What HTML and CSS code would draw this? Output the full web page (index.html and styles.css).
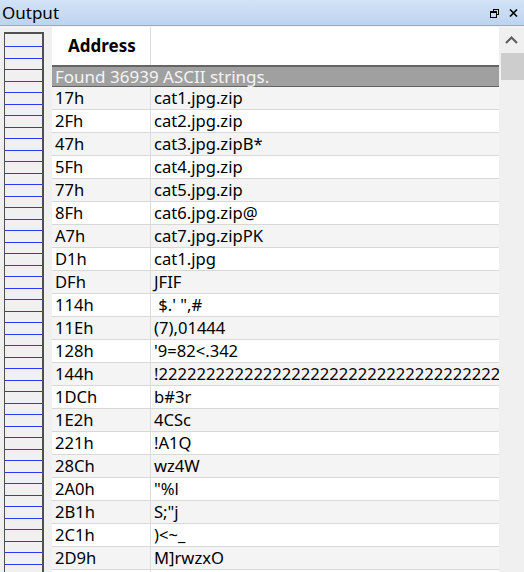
FILE: index.html
```html
<!DOCTYPE html>
<html>
<head>
<meta charset="utf-8">
<link rel="stylesheet" href="styles.css">
</head>
<body>
<div class="panel">
  <div class="titlebar">
    <span class="title">Output</span>
    <div class="tools">
      <svg class="ico" width="9" height="9" viewBox="0 0 9 9"><path d="M3 0.5H8.5V5.5H6.5M3 0.5V2.5M0.5 2.5H6.5V8.5H0.5Z M0.5 3.5H6.5" fill="none" stroke="#000" stroke-width="1" shape-rendering="crispEdges"/></svg>
      <svg class="ico" width="9" height="8" viewBox="0 0 9 8"><path d="M1 0.5L8 7.5M8 0.5L1 7.5" fill="none" stroke="#000" stroke-width="1.6"/></svg>
    </div>
  </div>
  <div class="body">
    <div class="gutter">
      <div class="minimap">
        <i></i><i></i><i></i><i></i><i></i><i></i><i></i><i></i><i></i><i></i>
        <i></i><i></i><i></i><i></i><i></i><i></i><i></i><i></i><i></i><i></i>
        <i></i><i></i><i></i><i></i><i></i><i></i><i></i><i></i><i></i><i></i>
        <i></i><i></i><i></i><i></i><i></i><i></i><i></i><i></i><i></i><i></i>
        <i></i><i></i><i></i><i></i><i></i><i></i><i></i><i></i>
      </div>
    </div>
    <div class="grid">
      <div class="header">
        <div class="c1 hcell">Address</div>
        <div class="c2 hcell"></div>
      </div>
      <div class="found">Found 36939 ASCII strings.</div>
      <div class="rows">
        <div class="row"><div class="c1">17h</div><div class="c2">cat1.jpg.zip</div></div>
        <div class="row"><div class="c1">2Fh</div><div class="c2">cat2.jpg.zip</div></div>
        <div class="row"><div class="c1">47h</div><div class="c2">cat3.jpg.zipB*</div></div>
        <div class="row"><div class="c1">5Fh</div><div class="c2">cat4.jpg.zip</div></div>
        <div class="row"><div class="c1">77h</div><div class="c2">cat5.jpg.zip</div></div>
        <div class="row"><div class="c1">8Fh</div><div class="c2">cat6.jpg.zip@</div></div>
        <div class="row"><div class="c1">A7h</div><div class="c2">cat7.jpg.zipPK</div></div>
        <div class="row"><div class="c1">D1h</div><div class="c2">cat1.jpg</div></div>
        <div class="row"><div class="c1">DFh</div><div class="c2">JFIF</div></div>
        <div class="row"><div class="c1">114h</div><div class="c2">&nbsp;$.' ",#</div></div>
        <div class="row"><div class="c1">11Eh</div><div class="c2">(7),01444</div></div>
        <div class="row"><div class="c1">128h</div><div class="c2">'9=82&lt;.342</div></div>
        <div class="row"><div class="c1">144h</div><div class="c2">!22222222222222222222222222222222222222222222222222</div></div>
        <div class="row"><div class="c1">1DCh</div><div class="c2">b#3r</div></div>
        <div class="row"><div class="c1">1E2h</div><div class="c2">4CSc</div></div>
        <div class="row"><div class="c1">221h</div><div class="c2">!A1Q</div></div>
        <div class="row"><div class="c1">28Ch</div><div class="c2">wz4W</div></div>
        <div class="row"><div class="c1">2A0h</div><div class="c2">"%l</div></div>
        <div class="row"><div class="c1">2B1h</div><div class="c2">S;"j</div></div>
        <div class="row"><div class="c1">2C1h</div><div class="c2">)&lt;~_</div></div>
        <div class="row"><div class="c1">2D9h</div><div class="c2">M]rwzxO</div></div>
        <div class="row row-empty"><div class="c1"></div><div class="c2"></div></div>
      </div>
    </div>
    <div class="scrollbar">
      <div class="arrow"><svg width="13" height="8" viewBox="0 0 13 8"><path d="M1 7L6.5 1.5L12 7" fill="none" stroke="#606060" stroke-width="2.2"/></svg></div>
      <div class="thumb"></div>
    </div>
  </div>
</div>
</body>
</html>
```
FILE: styles.css
```css
html, body { margin: 0; padding: 0; }
body {
  width: 524px;
  height: 572px;
  overflow: hidden;
  background: #f0f0f0;
  font-family: "Noto Sans", "Open Sans", sans-serif;
  font-size: 16.6px;
  color: #000;
}
.panel { display: flex; flex-direction: column; height: 572px; }
.titlebar {
  height: 25px;
  flex: none;
  display: flex;
  align-items: center;
  justify-content: space-between;
  background: linear-gradient(#d3e3f6, #bdd4ef);
  border-bottom: 1px solid #9fa9b6;
  padding-left: 2px;
  padding-right: 6px;
}
.title { font-size: 17px; color: #000; line-height: 25px; }
.tools { display: flex; gap: 10px; align-items: center; padding-top: 1px; }
.ico { display: block; }
.body { flex: 1; display: flex; min-height: 0; border-top: 1px solid #f4f4f4; }
.gutter { width: 52px; flex: none; padding: 5px 0 0 4px; box-sizing: border-box; }
.minimap {
  width: 37px;
  height: 548px;
  padding-top: 12px;
  border: 1px solid #505050;
  border-top-width: 2px;
  border-right-width: 2px;
  background: #f0f0f0;
  display: flex;
  flex-direction: column;
  overflow: hidden;
}
.minimap i {
  display: block;
  flex: none;
  height: 11px;
  border-top: 1px solid #3333ff;
}
.minimap i:nth-child(even) { height: 10px; }
.grid { width: 447px; flex: none; display: flex; flex-direction: column; overflow: hidden; background: #fff; }
.header { height: 38px; display: flex; background: #fff; flex: none; }
.hcell { font-weight: bold; font-size: 17px; line-height: 38px; }
.header .c1 { padding-left: 16px; }
.c1 { width: 99px; flex: none; box-sizing: border-box; padding-left: 3px; border-right: 1px solid #dcdcdc; white-space: nowrap; }
.c2 { flex: 1; padding-left: 3px; white-space: nowrap; overflow: hidden; }
.found {
  height: 19px;
  line-height: 19px;
  background: #a0a0a0;
  border-top: 2px solid #646464;
  border-bottom: 1px solid #646464;
  color: #f4f4f4;
  font-size: 17px;
  padding-left: 3px;
  flex: none;
  white-space: nowrap;
}
.rows { display: flex; flex-direction: column; }
.row { height: 22px; line-height: 22px; display: flex; border-bottom: 1px solid #d8d8d8; flex: none; }
.row:nth-child(odd) { background: #f4f4f4; }
.row:nth-child(even) { background: #fff; }
.scrollbar { width: 25px; flex: none; background: #f0f0f0; display: flex; flex-direction: column; align-items: center; }
.arrow { height: 26px; display: flex; align-items: center; justify-content: center; width: 100%; }
.thumb { width: 23px; height: 27px; background: #cdcdcd; margin-left: 1px; }
```
